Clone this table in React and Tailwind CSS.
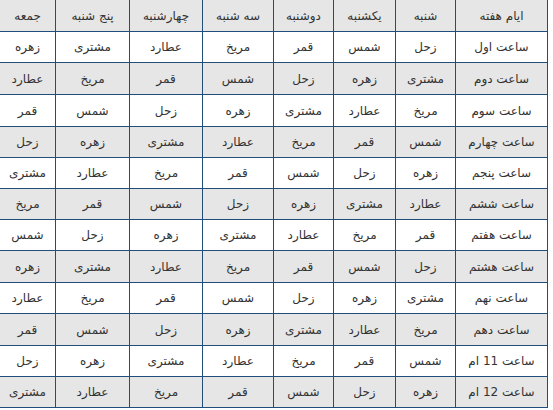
const HEADER = ['ایام هفته', 'شنبه', 'یکشنبه', 'دوشنبه', 'سه شنبه', 'چهارشنبه', 'پنج شنبه', 'جمعه'];

const ROWS = [
  ['ساعت اول', 'زحل', 'شمس', 'قمر', 'مریخ', 'عطارد', 'مشتری', 'زهره'],
  ['ساعت دوم', 'مشتری', 'زهره', 'زحل', 'شمس', 'قمر', 'مریخ', 'عطارد'],
  ['ساعت سوم', 'مریخ', 'عطارد', 'مشتری', 'زهره', 'زحل', 'شمس', 'قمر'],
  ['ساعت چهارم', 'شمس', 'قمر', 'مریخ', 'عطارد', 'مشتری', 'زهره', 'زحل'],
  ['ساعت پنجم', 'زهره', 'زحل', 'شمس', 'قمر', 'مریخ', 'عطارد', 'مشتری'],
  ['ساعت ششم', 'عطارد', 'مشتری', 'زهره', 'زحل', 'شمس', 'قمر', 'مریخ'],
  ['ساعت هفتم', 'قمر', 'مریخ', 'عطارد', 'مشتری', 'زهره', 'زحل', 'شمس'],
  ['ساعت هشتم', 'زحل', 'شمس', 'قمر', 'مریخ', 'عطارد', 'مشتری', 'زهره'],
  ['ساعت نهم', 'مشتری', 'زهره', 'زحل', 'شمس', 'قمر', 'مریخ', 'عطارد'],
  ['ساعت دهم', 'مریخ', 'عطارد', 'مشتری', 'زهره', 'زحل', 'شمس', 'قمر'],
  ['ساعت 11 ام', 'شمس', 'قمر', 'مریخ', 'عطارد', 'مشتری', 'زهره', 'زحل'],
  ['ساعت 12 ام', 'زهره', 'زحل', 'شمس', 'قمر', 'مریخ', 'عطارد', 'مشتری'],
];

// column widths, right to left (border-box)
const COLS = [
  'w-[93px] border-x',
  'w-[60px] border-l',
  'w-[62px] border-l',
  'w-[60px] border-l',
  'w-[71px] border-l',
  'w-[73px] border-l',
  'w-[74px] border-l',
  'w-[55px]',
];

// row heights incl. bottom border
const HEIGHTS = [32, 31, 32, 32, 31, 31, 31, 31, 32, 31, 32, 31, 31];

export default function App() {
  return (
    <div className="w-[553px] h-[410px] bg-white overflow-hidden" style={{ fontFamily: '"DejaVu Sans", Tahoma, sans-serif' }}>
      <div dir="rtl" className="w-[548px] flex flex-col text-[12px] text-[#333]">
        <Row cells={HEADER} h={HEIGHTS[0]} gray />
        {ROWS.map((r, i) => (
          <Row key={i} cells={r} h={HEIGHTS[i + 1]} gray={i % 2 === 1} />
        ))}
      </div>
    </div>
  );
}

function Row({ cells, h, gray }) {
  return (
    <div className={`flex ${h === 32 ? 'h-[32px]' : 'h-[31px]'} ${gray ? 'bg-[#e6e6e6]' : 'bg-white'}`}>
      {cells.map((c, i) => (
        <div
          key={i}
          className={`${COLS[i]} shrink-0 h-full flex items-center justify-center border-b border-[#1f4e7c] leading-none`}
        >
          {c}
        </div>
      ))}
    </div>
  );
}
